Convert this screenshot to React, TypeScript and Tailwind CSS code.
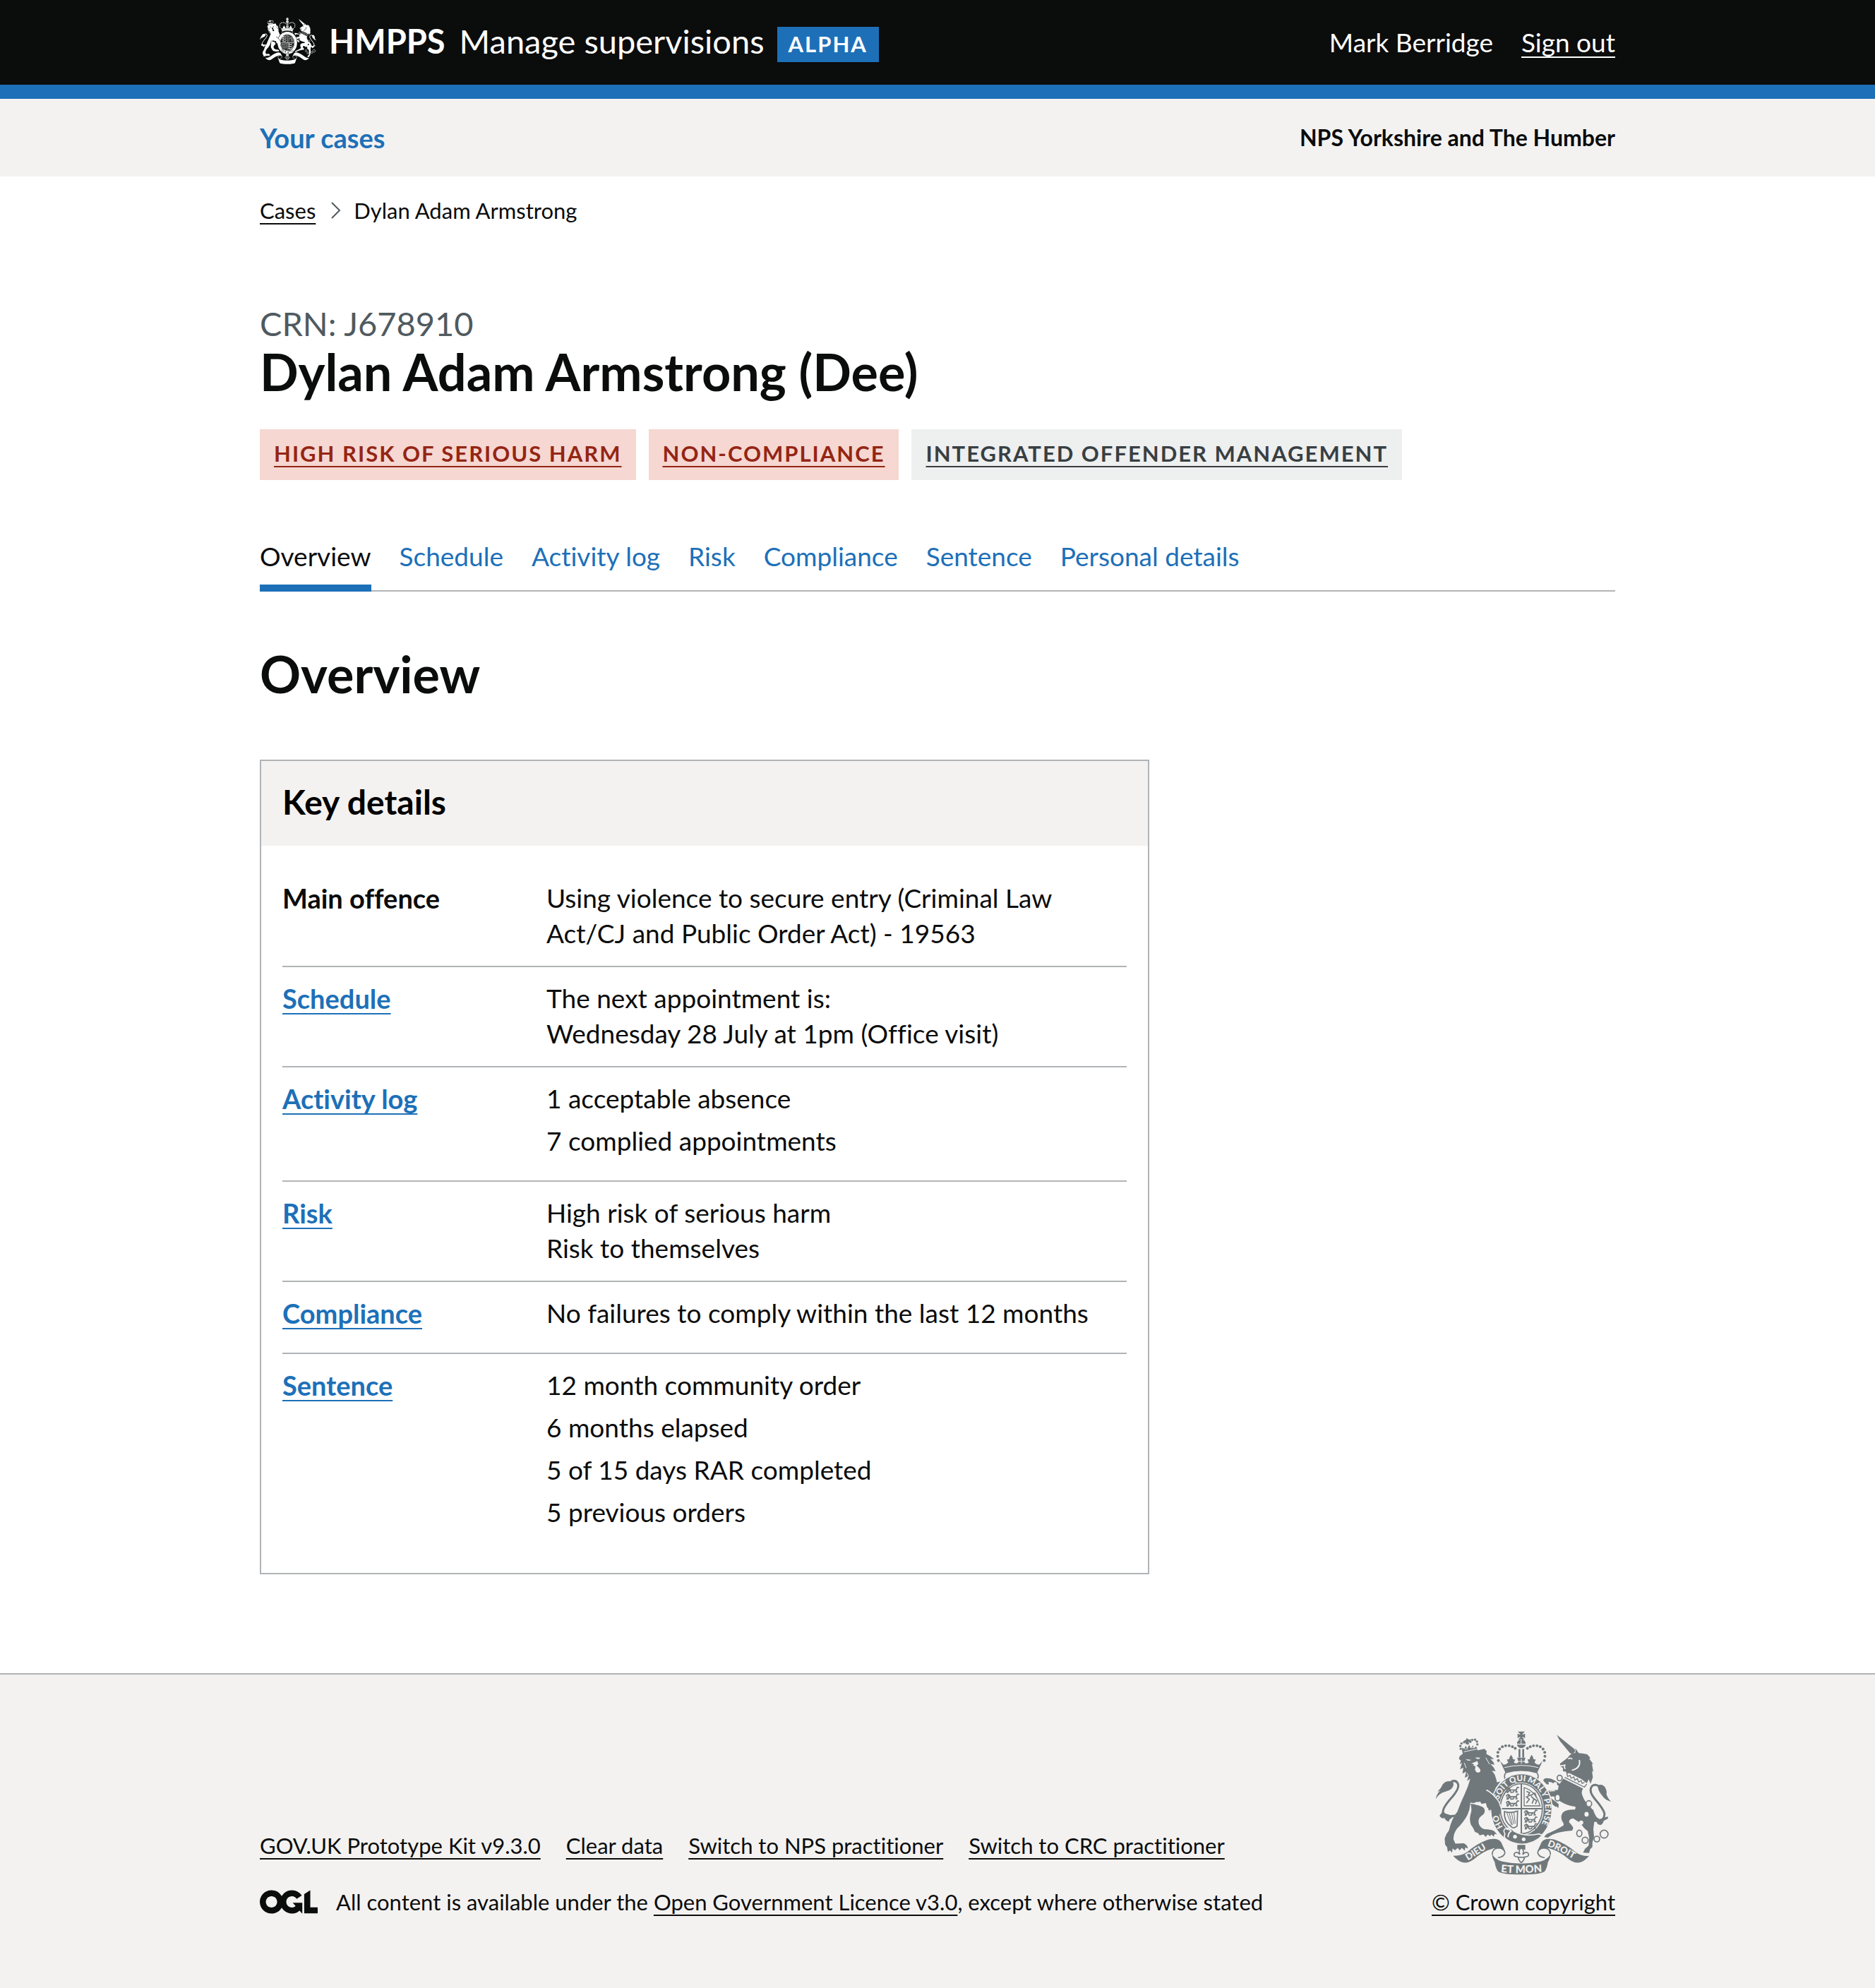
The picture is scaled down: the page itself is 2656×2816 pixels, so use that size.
import { useId, type ReactNode } from "react";

type CrestProps = { ground: string; motto?: boolean; className?: string };

const lionCrownBeads = [
  [173, 140], [171, 128], [176, 117], [187, 112], [198, 115], [214, 110], [222, 102], [234, 101], [242, 109], [244, 121],
];

const crownBeads = [
  [334, 190], [331, 172], [332, 155], [339, 141], [351, 131], [365, 127], [380, 127], [394, 131], [406, 138],
];

const garterWords = [
  { word: "HO", offset: 2 },
  { word: "SOIT", offset: 122 },
  { word: "QUI", offset: 209 },
  { word: "MAL", offset: 281 },
  { word: "Y", offset: 358 },
  { word: "PENSE", offset: 388 },
];

/** Three walking lions, stacked, for the first and fourth quarters of the shield. */
function Lions({ x, y }: { x: number; y: number }) {
  return (
    <g transform={`translate(${x} ${y})`} fill="none" stroke="currentColor" strokeWidth="5" strokeLinecap="round" strokeLinejoin="round">
      {[0, 29, 58].map((dy) => (
        <g key={dy} transform={`translate(0 ${dy})`}>
          <path d="M6 8q6-8 12-1l6 5h18q9 0 9-7t8-3" />
          <path d="M8 12q6 7 0 10M20 13l-8 10M22 15l4 8M40 13l-5 9h-6M46 12l6 9h-6" />
          <path d="M14 3l5 3-3 6z" fill="currentColor" />
        </g>
      ))}
    </g>
  );
}

function Crest({ ground, motto = false, className = "" }: CrestProps) {
  const id = useId();
  return (
    <svg viewBox="66 64 750 616" className={className} fill="currentColor" aria-hidden="true">
      {/* lion: crown */}
      <g>
        {lionCrownBeads.map(([x, y]) => (
          <circle key={`${x}-${y}`} cx={x} cy={y} r="5" />
        ))}
        <path d="M196 95l9 3 4 4 8-3-2 9-8 2 1 11-9 1-1-10-9 1-1-9 8-2z" />
        <path d="M178 146l2-12 8 7 6-14 7 12 8-16 6 15 11-13 2 14 10-9 7 11-1 8-62 13z" />
        <path d="M186 153l60-13M192 143l6-4 5 2M218 137l5-3 6 1" stroke={ground} strokeWidth="3" fill="none" />
      </g>
      {/* lion: head, mane and body */}
      <path d="M165 184L168 172L182 161L274 140L284 150L282 162L300 172L315 184L300 184L312 196L317 208L300 205L314 220L322 236L306 234L318 250L324 268L328 284L342 280L322 308L318 330L336 362L346 396L342 422L334 414L332 430L322 418L314 428L308 408L298 412L298 396L286 392L280 372L262 376L256 366L240 370L230 378Q256 382 270 392Q280 402 272 418L258 430Q246 440 250 460Q256 478 274 484Q300 484 316 492L328 506L318 504L314 516L304 506L298 514L288 506L280 517L270 506L254 510L246 500L234 496Q226 476 216 464Q208 440 216 416Q222 396 214 372Q212 400 202 422Q184 456 158 480Q140 504 142 528L150 546L186 544Q200 550 204 566L192 562L190 576L178 564L168 574L160 564L148 574L138 566L136 584L126 574L118 582L114 560L106 550L104 524L112 504L122 490L130 462Q142 428 158 410Q168 380 184 346Q202 310 214 268L200 278L206 256L190 264L196 238L180 246L184 220L170 228L178 200L168 206L174 190Z" />
      <path d="M214 372Q228 378 244 368M282 318Q312 336 330 366" stroke={ground} strokeWidth="5" fill="none" />
      <path d="M194 184L218 188Q204 196 194 184zM234 177L256 178Q250 190 234 177zM218 203L244 192L248 206L240 212L248 218L256 228Q260 240 248 242Q236 242 234 228L236 214L226 212L230 206z" fill={ground} />
      <path d="M188 200L196 222M280 178L296 206M200 244L206 258" stroke={ground} strokeWidth="3" fill="none" />
      {/* lion: tail */}
      <path d="M150 426Q104 436 97 410Q96 390 138 344Q170 306 160 288Q152 272 132 280" fill="none" stroke="currentColor" strokeWidth="9" />
      <path d="M66 356Q68 334 86 318Q78 324 74 322Q90 308 96 292Q110 274 138 280Q146 292 138 304Q130 318 110 322Q80 328 66 356z" />
      <path d="M92 412L82 426Q90 440 104 436Q106 446 122 452Q122 442 134 436L144 422L130 424z" />
      {/* unicorn: horn, head and mane */}
      <path d="M583 80L660 142L662 152L650 164L640 158L598 108z" />
      <path d="M644 164L664 156L663 138L678 158L694 160L714 164L728 180L722 182L740 206L734 204L740 240L734 234L738 262L728 290L720 270L712 288L690 270L636 244L628 248L622 238L610 236L610 222L600 216L597 204L612 192Q632 178 638 168z" />
      <path d="M598 213L618 210Q614 218 620 226M632 184Q640 176 650 184" stroke={ground} strokeWidth="5" fill="none" />
      <path d="M680 188Q688 222 648 232" stroke={ground} strokeWidth="6" fill="none" />
      {/* unicorn: crown collar */}
      <path d="M622 242L718 290L708 312L614 266z" fill={ground} />
      <path d="M626 244L630 258L640 254L645 266L656 260L661 274L672 268L677 282L688 276L692 288L702 284M618 262L702 304L712 290" fill="none" stroke="currentColor" strokeWidth="4" />
      {/* unicorn: body and legs */}
      <path d="M612 268L696 310Q686 324 694 342Q702 366 722 382Q742 402 746 436L740 484L743 516L736 540L736 560L726 570L722 586L696 584L704 568L720 554L722 520L716 492Q698 480 684 456Q664 446 654 438Q636 440 636 454Q650 468 654 478L650 490Q620 492 592 498Q566 504 546 520L530 518Q536 504 550 500Q588 484 612 468Q616 460 606 448Q598 428 610 412Q626 398 662 400L664 388Q630 384 600 366L574 344L556 344L562 354L584 370L592 378L590 394L582 386L578 388Q560 376 556 360Q542 350 540 334Q542 320 556 318L588 316L592 298L570 288Q556 280 548 282L550 292L540 292L526 276Q526 268 536 266Q556 264 576 276L596 290z" />
      <path d="M575 320Q562 318 552 322" stroke={ground} strokeWidth="4" fill="none" />
      {/* unicorn: tail */}
      <path d="M734 400Q746 440 766 446Q786 446 788 418Q784 398 746 354Q718 320 734 300Q748 288 766 302" fill="none" stroke="currentColor" strokeWidth="9" />
      <path d="M738 432L728 444Q740 456 754 452Q756 464 770 466Q782 462 784 448L800 440Q806 436 802 430L786 434Q766 448 738 432z" />
      <path d="M758 296Q778 288 790 304Q800 324 796 332Q798 348 816 366Q788 358 778 340Q760 322 758 296z" />
      {/* unicorn: chain */}
      <g fill="none" stroke="currentColor" strokeWidth="5">
        <ellipse cx="596" cy="265" rx="11" ry="12" />
        <ellipse cx="587" cy="349" rx="11" ry="14" fill={ground} />
        <ellipse cx="721" cy="375" rx="12" ry="13" fill={ground} />
        <ellipse cx="680" cy="502" rx="11" ry="14" />
        <ellipse cx="705" cy="531" rx="13" ry="13" />
        <ellipse cx="755" cy="526" rx="12" ry="12" />
        <circle cx="786" cy="505" r="17" />
      </g>
      <g fill={ground}>
        <ellipse cx="577" cy="291" rx="8" ry="9" />
        <ellipse cx="711" cy="420" rx="9" ry="10" />
        <circle cx="688" cy="456" r="9" />
      </g>
      {/* royal crown */}
      <path d="M417 66h30l-10 11v3l11-5v19l-11-5v4l9 7h-28l9-7v-4l-11 5V75l11 5v-3zM414 112q4-10 14-12h8q10 2 14 12v6h-36zM413 122h38q-3 14-19 15-16-1-19-15zM420 141h8v36h-8zM436 141h8v36h-8z" />
      <path d="M431 98v22" stroke={ground} strokeWidth="3" />
      {crownBeads.map(([x, y]) => (
        <g key={`${x}-${y}`}>
          <circle cx={x} cy={y} r="6" />
          <circle cx={864 - x} cy={y} r="6" />
        </g>
      ))}
      <path d="M341 192L356 208Q370 206 376 198L370 186L380 184Q380 176 388 166Q396 176 396 184L406 186L400 198Q406 204 414 202L420 196L414 178H450L444 196L450 202Q458 204 464 198L458 186L468 184Q468 176 476 166Q484 176 484 184L494 186L488 198Q494 206 508 208L523 192L500 242Q432 224 364 242z" />
      <path d="M432 182v22M420 194h24M360 220Q432 202 504 220" stroke={ground} strokeWidth="3" fill="none" />
      <path d="M366 242Q432 222 498 242Q508 254 502 268Q432 242 362 268Q356 254 366 242z" fill={ground} stroke="currentColor" strokeWidth="5" />
      {/* garter and shield */}
      <ellipse cx="432" cy="397" rx="134" ry="152" fill={ground} />
      <ellipse cx="432" cy="397" rx="129" ry="148" />
      <ellipse cx="432" cy="397" rx="96" ry="113" fill={ground} />
      <ellipse cx="432" cy="396" rx="90" ry="107" fill="none" stroke="currentColor" strokeWidth="5" />
      <path d="M432 288v216M342 396h180" stroke="currentColor" strokeWidth="6" />
      <path d="M444 306Q494 320 512 384H444z" fill="none" stroke="currentColor" strokeWidth="4" />
      <path d="M454 322L468 328L462 336L474 340L488 328M470 338L454 346L466 356L454 372M474 344L486 354L478 374M486 354L498 362L492 376M490 328L496 348" fill="none" stroke="currentColor" strokeWidth="5" />
      <Lions x={362} y={304} />
      <Lions x={440} y={402} />
      <path d="M360 408Q386 418 416 406L414 470Q400 484 390 474Q356 450 360 408z" fill="none" stroke="currentColor" strokeWidth="5" />
      <path d="M370 414l20 52M380 414l14 52M390 414l10 48M400 412l6 48" stroke="currentColor" strokeWidth="3" />
      {motto && (
        <g fill={ground} fontFamily="Lato, sans-serif" fontWeight="900" fontSize="35">
          <path id={`${id}-garter`} d="M355 475A102 119 0 1 1 497 489" fill="none" />
          {garterWords.map(({ word, offset }) => (
            <text key={word}>
              <textPath href={`#${id}-garter`} startOffset={offset}>{word}</textPath>
            </text>
          ))}
        </g>
      )}
      {/* buckle and strap */}
      <path d="M362 504Q350 486 368 480Q388 476 400 492Q444 518 506 504L522 510Q488 546 434 548Q390 546 364 524Q356 514 362 504z" stroke={ground} strokeWidth="5" />
      <path d="M368 484Q382 482 388 492Q374 502 376 518" fill="none" stroke={ground} strokeWidth="6" />
      <circle cx="405" cy="516" r="8" fill={ground} />
      <circle cx="442" cy="527" r="8" fill={ground} />
      {/* lion's paw over the garter */}
      <path d="M270 322L290 320Q320 342 336 374L345 400L340 422L332 412L327 426L318 412L310 424L303 400L292 404L288 380z" />
      <path d="M284 316Q320 338 338 370L348 398" fill="none" stroke={ground} strokeWidth="5" />
      {/* pendant */}
      <path d="M415 551h34v22q-17-8-34 0z" />
      <path d="M432 562Q418 574 426 592Q412 576 402 588Q398 602 414 602L420 604V612L428 624Q432 628 436 624L444 612V604L450 602Q466 602 462 588Q452 576 438 592Q446 574 432 562z" fill={ground} stroke="currentColor" strokeWidth="5" />
      <path d="M416 604h32" stroke="currentColor" strokeWidth="5" />
      {/* scroll */}
      <path d="M140 598Q176 598 202 580Q240 546 290 528Q332 518 346 540L362 576Q342 560 312 566Q270 578 234 608Q206 632 180 626Q160 620 140 598z" />
      <path d="M722 598Q688 600 662 580Q624 546 574 528Q532 518 518 540L502 576Q522 560 552 566Q594 578 630 608Q658 632 684 626Q704 620 722 598z" />
      <path d="M308 592Q306 570 330 564Q358 564 362 584Q360 602 332 606M556 592Q558 570 534 564Q506 564 502 584Q504 602 532 606" fill={ground} stroke="currentColor" strokeWidth="5" />
      <path d="M305 580Q310 610 350 622Q432 640 514 622Q554 610 559 580Q556 610 546 624Q542 650 532 664Q516 678 432 678Q348 678 332 664Q322 650 318 624Q306 606 305 580z" />
      {motto && (
        <g fill={ground} fontFamily="Lato, sans-serif" fontWeight="900">
          <path id={`${id}-left`} d="M203 618Q246 592 322 542" fill="none" />
          <path id={`${id}-right`} d="M542 556Q600 576 690 634" fill="none" />
          <path id={`${id}-centre`} d="M345 668Q432 676 550 664" fill="none" />
          <text fontSize="40">
            <textPath href={`#${id}-left`}>DIEU</textPath>
          </text>
          <text fontSize="40">
            <textPath href={`#${id}-right`}>DROIT</textPath>
          </text>
          <text fontSize="45">
            <textPath href={`#${id}-centre`}>ET MON</textPath>
          </text>
        </g>
      )}
    </svg>
  );
}

function OglLogo() {
  return (
    <svg viewBox="0 0 483.2 195.7" className="h-[34px] w-[82px] shrink-0" fill="currentColor" aria-hidden="true">
      <path d="M421.5 142.8V.1l-50.7 32.3v161.1h112.4v-50.7zm-122.3-9.6A47.12 47.12 0 0 1 221 97.8c0-26 21.1-47.1 47.1-47.1 16.7 0 31.4 8.7 39.7 21.8l42.7-27.2A97.63 97.63 0 0 0 268.1 0c-36.5 0-68.3 20.1-85.1 49.7A98 98 0 0 0 97.8 0C43.9 0 0 43.9 0 97.8s43.9 97.8 97.8 97.8c36.5 0 68.3-20.1 85.1-49.7a97.76 97.76 0 0 0 149.6 25.4l19.4 22.2h3v-87.8h-80l24.3 27.5zM97.8 145c-26 0-47.1-21.1-47.1-47.1s21.1-47.1 47.1-47.1 47.1 21.1 47.1 47.1S123.8 145 97.8 145" />
    </svg>
  );
}

function Container({ children, className = "" }: { children: ReactNode; className?: string }) {
  return <div className={`mx-auto w-full max-w-[1980px] px-[30px] ${className}`}>{children}</div>;
}

function Link({ children, className = "" }: { children: ReactNode; className?: string }) {
  return (
    <a href="#" className={`underline decoration-2 underline-offset-[6px] [text-decoration-skip-ink:none] ${className}`}>
      {children}
    </a>
  );
}

const tags = [
  { label: "High risk of serious harm", tone: "bg-[#f6d7d2] text-[#942514]" },
  { label: "Non-compliance", tone: "bg-[#f6d7d2] text-[#942514]" },
  { label: "Integrated Offender Management", tone: "bg-[#eeefef] text-[#383f43]" },
];

const tabs = ["Overview", "Schedule", "Activity log", "Risk", "Compliance", "Sentence", "Personal details"];

const footerLinks = ["GOV.UK Prototype Kit v9.3.0", "Clear data", "Switch to NPS practitioner", "Switch to CRC practitioner"];

type Row = { label: string; link?: boolean; spaced?: boolean; lines: string[] };

const rows: Row[] = [
  { label: "Main offence", lines: ["Using violence to secure entry (Criminal Law Act/CJ and Public Order Act) - 19563"] },
  { label: "Schedule", link: true, lines: ["The next appointment is:", "Wednesday 28 July at 1pm (Office visit)"] },
  { label: "Activity log", link: true, spaced: true, lines: ["1 acceptable absence", "7 complied appointments"] },
  { label: "Risk", link: true, lines: ["High risk of serious harm", "Risk to themselves"] },
  { label: "Compliance", link: true, spaced: true, lines: ["No failures to comply within the last 12 months"] },
  { label: "Sentence", link: true, spaced: true, lines: ["12 month community order", "6 months elapsed", "5 of 15 days RAR completed", "5 previous orders"] },
];

export default function App() {
  return (
    <div className="flex min-h-screen flex-col bg-white font-[Lato,sans-serif] text-[37px] leading-[50px] text-[#0b0c0c] [font-variant-ligatures:none]">
      <header className="border-b-[20px] border-[#1d70b8] bg-[#0b0c0c] text-white">
        <Container className="flex min-h-[120px] items-center justify-between">
          <div className="flex items-center pb-1">
            <a href="#" className="flex items-center text-[47px] leading-[60px]">
              <Crest ground="#0b0c0c" className="h-[68px] w-20" />
              <span className="ml-[18px] font-bold">HMPPS</span>
              <span className="ml-5">Manage supervisions</span>
            </a>
            <strong className="mt-[10px] ml-[18px] bg-[#1d70b8] px-4 pt-[8px] pb-[10px] text-[31px] leading-[32px] tracking-[2px] uppercase">
              Alpha
            </strong>
          </div>
          <div className="flex gap-10">
            <span>Mark Berridge</span>
            <Link>Sign out</Link>
          </div>
        </Container>
      </header>

      <nav aria-label="Primary" className="bg-[#f3f2f1] font-bold">
        <Container className="flex min-h-[110px] items-center justify-between">
          <a href="#" className="text-[38px] text-[#1d70b8]">Your cases</a>
          <span className="text-[32px]">NPS Yorkshire and The Humber</span>
        </Container>
      </nav>

      <Container>
        <nav aria-label="Breadcrumb" className="pt-[28px] text-[31px] leading-[40px]">
          <ol className="flex items-center">
            <li>
              <Link>Cases</Link>
            </li>
            <li className="flex items-center">
              <svg viewBox="0 0 14 24" className="mr-[18px] ml-[22px] h-6 w-[14px]" fill="none" stroke="#505a5f" strokeWidth="2" aria-hidden="true">
                <path d="M1 1l11 11L1 23" />
              </svg>
              Dylan Adam Armstrong
            </li>
          </ol>
        </nav>
      </Container>

      <main className="pb-[140px]">
        <Container>
          <p className="mt-[112px] text-[47px] leading-[56px] text-[#505a5f]">CRN: J678910</p>
          <h1 className="text-[72px] leading-[80px] font-bold">Dylan Adam Armstrong (Dee)</h1>

          <ul className="mt-[42px] flex flex-wrap gap-[18px]">
            {tags.map((tag) => (
              <li key={tag.label} className={`px-5 pt-[18px] pb-[22px] text-[31px] leading-[32px] font-bold tracking-[2px] uppercase ${tag.tone}`}>
                <Link>{tag.label}</Link>
              </li>
            ))}
          </ul>

          <nav aria-label="Case" className="mt-[83px]">
            <ul className="flex flex-wrap gap-x-10 border-b-2 border-[#b1b4b6]">
              {tabs.map((tab, i) => (
                <li key={tab} className="-mb-0.5">
                  <a
                    href="#"
                    aria-current={i === 0 ? "page" : undefined}
                    className={i === 0 ? "block border-b-[10px] border-[#1d70b8] pb-[15px]" : "block pb-[25px] text-[#1d70b8]"}
                  >
                    {tab}
                  </a>
                </li>
              ))}
            </ul>
          </nav>

          <h2 className="mt-[76px] text-[72px] leading-[80px] font-bold">Overview</h2>

          <section className="mt-[82px] max-w-[1260px] border-2 border-[#b1b4b6]">
            <h3 className="bg-[#f3f2f1] px-[30px] pt-[28px] pb-[32px] text-[48px] leading-[60px] font-bold text-black">Key details</h3>
            <dl className="p-[30px] [&>div:last-child]:border-b-0">
              {rows.map((row) => (
                <div key={row.label} className="flex border-b-2 border-[#b1b4b6] pt-[19px] pb-[21px]">
                  <dt className="w-[374px] shrink-0 text-[38px] font-bold">
                    {row.link ? <Link className="text-[#1d70b8]">{row.label}</Link> : row.label}
                  </dt>
                  <dd className="max-w-[780px]">
                    {row.lines.map((line) => (
                      <p key={line} className={row.spaced ? "mb-[10px]" : ""}>
                        {line}
                      </p>
                    ))}
                  </dd>
                </div>
              ))}
            </dl>
          </section>
        </Container>
      </main>

      <footer className="grow border-t-2 border-[#b1b4b6] bg-[#f3f2f1] pt-20 pb-[102px] text-[31px] leading-[40px]">
        <Container className="flex items-end justify-between">
          <div>
            <ul className="flex flex-wrap gap-x-[36px]">
              {footerLinks.map((label) => (
                <li key={label}>
                  <Link>{label}</Link>
                </li>
              ))}
            </ul>
            <div className="mt-10 flex items-center gap-[26px]">
              <OglLogo />
              <p>
                All content is available under the <Link>Open Government Licence v3.0</Link>, except where otherwise stated
              </p>
            </div>
          </div>
          <div className="flex flex-col items-center gap-[18px]">
            <Crest ground="#f3f2f1" motto className="h-[204px] w-[250px] text-[#70787b]" />
            <Link>© Crown copyright</Link>
          </div>
        </Container>
      </footer>
    </div>
  );
}
